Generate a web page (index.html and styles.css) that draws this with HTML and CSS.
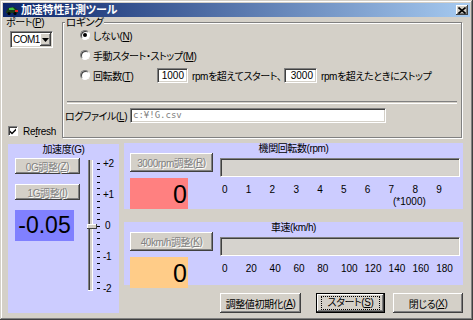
FILE: index.html
```html
<!DOCTYPE html>
<html lang="ja">
<head>
    <title>加速特性計測ツール</title>
    <link rel="stylesheet" href="styles.css">
</head>
<body>
<div class="window">
    <div class="titlebar">
        <svg class="app-icon" width="14" height="12" viewBox="0 0 14 12">
            <path d="M1 8 L3 4 L9 3 L13 6 L13 9 L1 9 Z" fill="#1a3a1a"/>
            <path d="M4 4 L8 3.5 L10 6 L4 6 Z" fill="#40c040"/>
            <rect x="10" y="6" width="3" height="2" fill="#e02020"/>
            <circle cx="4" cy="9.5" r="1.6" fill="#000"/>
            <circle cx="10" cy="9.5" r="1.6" fill="#000"/>
        </svg>
        <span class="title">加速特性計測ツール</span>
        <span class="close-btn">
            <svg width="8" height="7" viewBox="0 0 8 7"><path d="M0.5 0.5 L7.5 6.5 M7.5 0.5 L0.5 6.5" stroke="#000" stroke-width="1.6"/></svg>
        </span>
    </div>

    <div class="client">
        <div class="top-row">
            <div class="port-col">
                <div class="port-label">ポート(<u>P</u>)</div>
                <div class="combo">
                    <span class="combo-text">COM1</span>
                    <span class="combo-arrow"><svg width="7" height="4" viewBox="0 0 7 4"><path d="M0 0 H7 L3.5 4 Z" fill="#000"/></svg></span>
                </div>
                <div class="check-row">
                    <span class="checkbox"><svg width="8" height="8" viewBox="0 0 8 8"><path d="M1 3.5 L3 5.5 L7 1.5 L7 3.5 L3 7.5 L1 5.5 Z" fill="#000"/></svg></span>
                    <span class="check-label">Re<u>f</u>resh</span>
                </div>
            </div>

            <fieldset class="logging">
                <legend>ロギング</legend>
                <div class="radio-row first">
                    <span class="radio checked"></span>
                    <span>しない(<u>N</u>)</span>
                </div>
                <div class="radio-row">
                    <span class="radio"></span>
                    <span>手動スタート・ストップ(<u>M</u>)</span>
                </div>
                <div class="radio-row">
                    <span class="radio"></span>
                    <span class="radio-label">回転数(<u>T</u>)</span>
                    <span class="edit num start-rpm">1000</span>
                    <span class="rpm-text start-text">rpmを超えてスタート、</span>
                    <span class="edit num stop-rpm">3000</span>
                    <span class="rpm-text">rpmを超えたときにストップ</span>
                </div>
                <div class="separator"></div>
                <div class="logfile-row">
                    <span class="logfile-label">ログファイル(<u>L</u>)</span>
                    <span class="edit path">c:¥!G.csv</span>
                </div>
            </fieldset>
        </div>

        <div class="bottom-area">
            <div class="panel accel-panel">
                <div class="panel-title">加速度(G)</div>
                <div class="accel-body">
                    <div class="accel-controls">
                        <div class="btn disabled small">0G調整(<u>Z</u>)</div>
                        <div class="btn disabled small">1G調整(<u>I</u>)</div>
                        <div class="value-box blue">-0.05</div>
                    </div>
                    <svg class="slider" width="35" height="140" viewBox="0 0 35 140">
                        <rect x="4" y="4" width="1" height="130" fill="#808080"/>
                        <rect x="5" y="4" width="1" height="130" fill="#404040"/>
                        <rect x="6" y="4" width="2" height="130" fill="#d4d0c8"/>
                        <rect x="8" y="4" width="1" height="131" fill="#fff"/>
                        <rect x="4" y="134" width="5" height="1" fill="#fff"/>
                        <g fill="#000" id="ticks"></g>
                        <rect x="3" y="68" width="10" height="4" fill="#fff"/>
                        <rect x="4" y="69" width="8" height="3" fill="#d4d0c8"/>
                        <rect x="3" y="72" width="10" height="1" fill="#404040"/>
                        <rect x="12" y="68" width="1" height="5" fill="#404040"/>
                        <g class="tick-labels">
                            <text x="19" y="11">+2</text>
                            <text x="19" y="42">+1</text>
                            <text x="21" y="73">0</text>
                            <text x="19" y="104">-1</text>
                            <text x="19" y="136">-2</text>
                        </g>
                    </svg>
                </div>
            </div>

            <div class="right-col">
                <div class="panel meter-panel rpm">
                    <div class="panel-title">機関回転数(rpm)</div>
                    <div class="meter-body">
                        <div class="meter-left">
                            <div class="btn disabled">3000rpm調整(<u>R</u>)</div>
                            <div class="value-box red">0</div>
                        </div>
                        <div class="meter-right">
                            <div class="bar"></div>
                            <div class="scale">
                                <span>0</span><span>1</span><span>2</span><span>3</span><span>4</span>
                                <span>5</span><span>6</span><span>7</span><span>8</span><span>9</span>
                            </div>
                            <div class="scale-unit">(*1000)</div>
                        </div>
                    </div>
                </div>

                <div class="panel meter-panel speed">
                    <div class="panel-title">車速(km/h)</div>
                    <div class="meter-body">
                        <div class="meter-left">
                            <div class="btn disabled">40km/h調整(<u>K</u>)</div>
                            <div class="value-box orange">0</div>
                        </div>
                        <div class="meter-right">
                            <div class="bar"></div>
                            <div class="scale">
                                <span>0</span><span>20</span><span>40</span><span>60</span><span>80</span>
                                <span>100</span><span>120</span><span>140</span><span>160</span><span>180</span>
                            </div>
                        </div>
                    </div>
                </div>

                <div class="button-row">
                    <div class="btn reset-btn">調整値初期化(<u>A</u>)</div>
                    <div class="btn default start-btn"><span class="focus">スタート(<u>S</u>)</span></div>
                    <div class="btn close-btn-main">閉じる(<u>X</u>)</div>
                </div>
            </div>
        </div>
    </div>
</div>

<script>
    // slider tick marks, 5 per unit from +2 to -2
    const ticks = document.getElementById('ticks');
    for (let i = 0; i <= 20; i++) {
        const t = document.createElementNS('http://www.w3.org/2000/svg', 'rect');
        t.setAttribute('x', 13);
        t.setAttribute('y', Math.round(7 + i * 6.25));
        t.setAttribute('width', 3);
        t.setAttribute('height', 1);
        ticks.appendChild(t);
    }
</script>
</body>
</html>
```

FILE: styles.css
```css
body {
    margin: 0;
    background-color: #d4d0c8;
}

.window {
    width: 473px;
    height: 320px;
    box-sizing: border-box;
    padding: 3px;
    background-color: #d4d0c8;
    box-shadow: inset -1px -1px #404040, inset 1px 1px #d4d0c8,
                inset -2px -2px #808080, inset 2px 2px #fff;
    display: flex;
    flex-direction: column;
    font-family: "Liberation Sans", "Noto Sans CJK JP", sans-serif;
    font-size: 10px;
    letter-spacing: -0.4px;
    font-feature-settings: "palt";
    white-space: nowrap;
    color: #000;
}

u {
    text-decoration: underline;
}

/* title bar */
.titlebar {
    height: 14px;
    display: flex;
    align-items: center;
    padding: 0 2px;
    background: linear-gradient(to right, #0a246a, #a6caf0);
    color: #fff;
    font-weight: bold;
}

.app-icon {
    margin-right: 2px;
}

.title {
    font-size: 11px;
    letter-spacing: -0.2px;
    line-height: 14px;
}

.close-btn {
    margin-left: auto;
    width: 12px;
    height: 10px;
    display: flex;
    align-items: center;
    justify-content: center;
    background-color: #d4d0c8;
    box-shadow: inset -1px -1px #404040, inset 1px 1px #fff, inset -2px -2px #808080;
}

/* client */
.client {
    flex: 1;
    display: flex;
    flex-direction: column;
}

.top-row {
    display: flex;
    height: 121px;
}

.port-col {
    width: 59px;
    display: flex;
    flex-direction: column;
}

.port-label {
    margin-left: 3px;
    line-height: 11px;
}

.combo {
    margin: 3px 0 0 7px;
    width: 43px;
    height: 17px;
    box-sizing: border-box;
    display: flex;
    align-items: center;
    background-color: #fff;
    border: 1px solid;
    border-color: #808080 #fff #fff #808080;
    box-shadow: inset 1px 1px #404040, inset -1px -1px #d4d0c8;
    padding: 1px;
}

.combo-text {
    flex: 1;
    font-size: 10px;
    letter-spacing: -0.5px;
    padding-left: 1px;
}

.combo-arrow {
    width: 13px;
    height: 13px;
    display: flex;
    align-items: center;
    justify-content: center;
    background-color: #d4d0c8;
    box-shadow: inset -1px -1px #404040, inset 1px 1px #fff, inset -2px -2px #808080;
}

.check-row {
    margin: auto 0 0 5px;
    display: flex;
    align-items: center;
    height: 14px;
}

.check-label {
    letter-spacing: -0.3px;
}

.checkbox {
    width: 10px;
    height: 10px;
    box-sizing: border-box;
    display: flex;
    align-items: center;
    justify-content: center;
    margin-right: 5px;
    background-color: #fff;
    border: 1px solid;
    border-color: #808080 #fff #fff #808080;
    box-shadow: inset 1px 1px #404040;
}

/* logging group */
.logging {
    margin: 0;
    padding: 0;
    width: 400px;
    box-sizing: border-box;
    border: 1px solid #808080;
    box-shadow: 1px 1px 0 #fff, inset 1px 1px 0 #fff;
}

.logging legend {
    margin-left: 2px;
    padding: 0 1px;
    line-height: 10px;
    font-size: 10.5px;
    background-color: #d4d0c8;
}

.radio-row {
    height: 20px;
    display: flex;
    align-items: center;
    padding-left: 17px;
}

.radio-row.first {
    margin-top: -2px;
}

.radio {
    width: 10px;
    height: 10px;
    box-sizing: border-box;
    border-radius: 50%;
    margin-right: 3px;
    background-color: #fff;
    border: 1px solid;
    border-color: #808080 #fff #fff #808080;
    box-shadow: inset 1px 1px #404040;
    position: relative;
}

.radio.checked::after {
    content: "";
    position: absolute;
    left: 2px;
    top: 2px;
    width: 4px;
    height: 4px;
    border-radius: 50%;
    background-color: #000;
}

.radio-label {
    width: 64px;
}

.edit {
    display: block;
    box-sizing: border-box;
    height: 15px;
    background-color: #fff;
    border: 1px solid;
    border-color: #808080 #fff #fff #808080;
    box-shadow: inset 1px 1px #404040, inset -1px -1px #d4d0c8;
    font-size: 10px;
    letter-spacing: 0;
    line-height: 13px;
    padding: 0 3px;
}

.edit.num {
    text-align: right;
}

.start-rpm {
    width: 31px;
}

.stop-rpm {
    width: 33px;
}

.rpm-text {
    margin-left: 4px;
}

.rpm-text.start-text {
    width: 92px;
}

.separator {
    margin: 16px 4px 0 4px;
    height: 1px;
    border-top: 1px solid #808080;
    border-bottom: 1px solid #fff;
}

.logfile-row {
    margin-top: 4px;
    display: flex;
    align-items: center;
    padding-left: 2px;
}

.logfile-label {
    width: 65px;
}

.edit.path {
    width: 256px;
    color: #808080;
    font-family: "DejaVu Sans Mono", monospace;
    font-size: 9px;
    padding-left: 2px;
}

/* meters */
.bottom-area {
    flex: 1;
    display: flex;
    margin-top: 5px;
}

.panel {
    background-color: #ccccff;
}

.panel-title {
    text-align: center;
    line-height: 12px;
    height: 10px;
}

.accel-panel {
    margin: 1px 0 4px 5px;
    width: 111px;
    display: flex;
    flex-direction: column;
}

.accel-body {
    display: flex;
}

.accel-controls {
    margin: 4px 0 0 7px;
    width: 65px;
    display: flex;
    flex-direction: column;
}

.accel-controls .btn + .btn {
    margin-top: 10px;
}

.slider {
    margin: 2px 0 0 4px;
}

.tick-labels text {
    font-family: "Liberation Sans", sans-serif;
    font-size: 10px;
    fill: #000;
}

.btn {
    box-sizing: border-box;
    height: 19px;
    display: flex;
    align-items: center;
    justify-content: center;
    background-color: #d4d0c8;
    box-shadow: inset -1px -1px #404040, inset 1px 1px #fff,
                inset -2px -2px #808080, inset 2px 2px #d4d0c8;
}

.btn.small {
    height: 16px;
}

.btn.disabled {
    color: #808080;
    text-shadow: 1px 1px #fff;
}

.value-box {
    font-family: "Liberation Sans", sans-serif;
    letter-spacing: 0;
    color: #000;
    text-align: right;
}

.value-box.blue {
    margin-top: 10px;
    width: 59px;
    height: 31px;
    background-color: #8080ff;
    font-size: 23px;
    line-height: 31px;
    text-align: center;
}

.value-box.red,
.value-box.orange {
    margin-top: 6px;
    width: 58px;
    height: 31px;
    font-size: 25px;
    line-height: 33px;
    padding-right: 1px;
    box-sizing: border-box;
}

.value-box.red {
    background-color: #ff8080;
}

.value-box.orange {
    background-color: #ffcc88;
}

.right-col {
    margin-left: 5px;
    width: 339px;
    display: flex;
    flex-direction: column;
}

.meter-panel.rpm {
    height: 66px;
}

.meter-panel.speed {
    margin-top: 13px;
    height: 63px;
}

.meter-body {
    display: flex;
    padding-left: 6px;
}

.meter-left {
    width: 83px;
    display: flex;
    flex-direction: column;
}

.meter-right {
    margin-left: 7px;
    width: 240px;
}

.bar {
    margin-top: 5px;
    height: 19px;
    box-sizing: border-box;
    background-color: #d6d3ce;
    border: 1px solid;
    border-color: #808080 #fff #fff #808080;
    box-shadow: inset 1px 1px #404040, inset -1px -1px #d4d0c8;
}

.scale {
    display: flex;
    padding-left: 2px;
    margin-top: 7px;
    line-height: 12px;
    font-size: 10px;
    letter-spacing: 0;
}

.scale span {
    width: 24px;
}

.scale-unit {
    margin-left: 173px;
    line-height: 12px;
    font-size: 10px;
    letter-spacing: 0;
}

.button-row {
    margin-top: auto;
    margin-bottom: 4px;
    display: flex;
    justify-content: flex-end;
}

.button-row .btn {
    height: 20px;
}

.reset-btn {
    width: 81px;
}

.start-btn {
    margin-left: 15px;
    width: 69px;
}

.close-btn-main {
    margin-left: 8px;
    width: 70px;
}

.btn.default {
    border: 1px solid #000;
    box-shadow: inset -1px -1px #404040, inset 1px 1px #fff, inset -2px -2px #808080;
}

.focus {
    padding: 0 6px;
    border: 1px dotted #000;
    line-height: 12px;
}
```
